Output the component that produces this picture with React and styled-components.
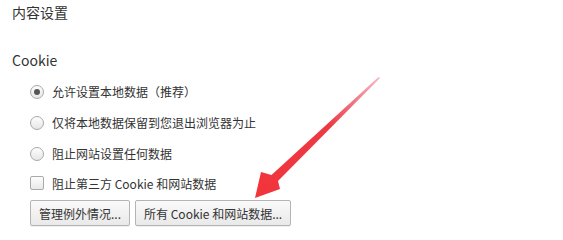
import React from "react";
import styled, { createGlobalStyle } from "styled-components";

const GlobalStyle = createGlobalStyle`
  body {
    margin: 0;
    background: #ffffff;
    font-family: "Noto Sans CJK SC", "Liberation Sans", sans-serif;
    color: #333333;
  }
`;

const Page = styled.div`
  position: relative;
  width: 563px;
  height: 240px;
  padding-left: 12px;
  box-sizing: border-box;
  overflow: hidden;
`;

const Title = styled.h1`
  margin: 0;
  font-size: 14px;
  font-weight: normal;
  line-height: 24px;
`;

const Section = styled.h2`
  margin: 24px 0 4px;
  font-size: 14px;
  font-weight: normal;
  line-height: 24px;
`;

const Options = styled.div`
  display: flex;
  flex-direction: column;
  padding-left: 18px;
`;

const Row = styled.label`
  display: flex;
  align-items: center;
  gap: 8px;
  height: ${(p) => p.$h || 31}px;
  font-size: 12px;
`;

const Radio = styled.span`
  width: 12px;
  height: 12px;
  border-radius: 50%;
  border: 1px solid #a8a8a8;
  background: linear-gradient(#fdfdfd, #e6e6e6);
  display: flex;
  align-items: center;
  justify-content: center;
  &::after {
    content: "";
    width: 6px;
    height: 6px;
    border-radius: 50%;
    background: ${(p) => (p.$checked ? "#555555" : "transparent")};
  }
`;

const Check = styled.span`
  width: 12px;
  height: 12px;
  border-radius: 2px;
  border: 1px solid #aaaaaa;
  background: linear-gradient(#fdfdfd, #e8e8e8);
`;

const Buttons = styled.div`
  display: flex;
  gap: 5px;
  margin-top: 3px;
`;

const Button = styled.button`
  height: 26px;
  padding: 0 8px;
  font-family: inherit;
  font-size: 12px;
  color: #333333;
  border: 1px solid #b4b4b4;
  border-radius: 2px;
  background: linear-gradient(#fafafa, #e9e9e9);
  box-shadow: 0 1px 0 rgba(0, 0, 0, 0.06);
`;

const Arrow = styled.svg`
  position: absolute;
  left: 0;
  top: 0;
  pointer-events: none;
`;

const options = [
  { text: "允许设置本地数据（推荐）", checked: true },
  { text: "仅将本地数据保留到您退出浏览器为止" },
  { text: "阻止网站设置任何数据" },
];

export default function App() {
  return (
    <Page>
      <GlobalStyle />
      <Title>内容设置</Title>
      <Section>Cookie</Section>
      <Options>
        {options.map((o) => (
          <Row key={o.text}>
            <Radio $checked={o.checked} />
            {o.text}
          </Row>
        ))}
        <Row $h={28}>
          <Check />
          阻止第三方 Cookie 和网站数据
        </Row>
        <Buttons>
          <Button>管理例外情况...</Button>
          <Button>所有 Cookie 和网站数据...</Button>
        </Buttons>
      </Options>
      <Arrow width="563" height="240" viewBox="0 0 563 240">
        <defs>
          <linearGradient id="ar" x1="255" y1="198" x2="380" y2="77" gradientUnits="userSpaceOnUse">
            <stop offset="0" stopColor="#f2343a" />
            <stop offset="0.6" stopColor="#ec3a45" />
            <stop offset="1" stopColor="#f7b8c8" />
          </linearGradient>
        </defs>
        <polygon
          points="255,198 280,189 278,181 380,78 378.5,77 271.5,175 261,172"
          fill="url(#ar)"
        />
      </Arrow>
    </Page>
  );
}
